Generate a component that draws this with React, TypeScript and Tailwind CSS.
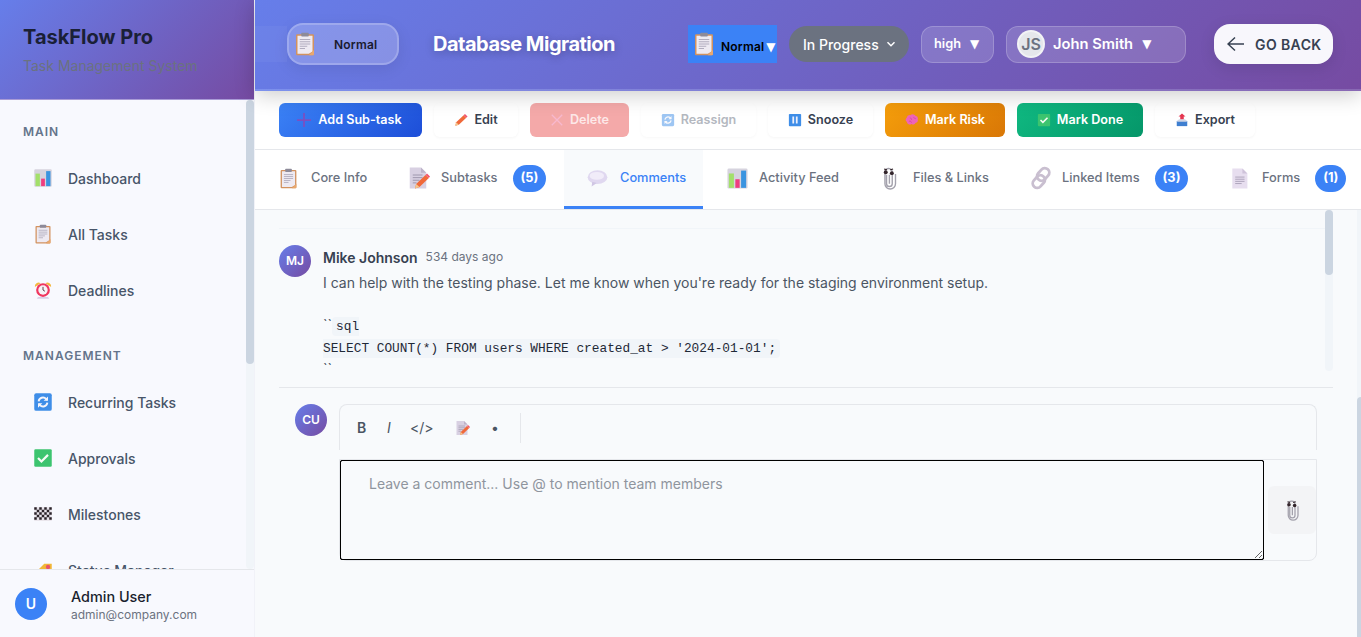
import React from "react";

type IconProps = { name: string; size?: number; className?: string };

function Emoji({ name, size = 20, className = "" }: IconProps) {
  const common = { width: size, height: size, viewBox: "0 0 32 32", className: "shrink-0 " + className };
  switch (name) {
    case "clipboard":
      return (
        <svg {...common}>
          <rect x="4" y="3" width="24" height="28" rx="1.5" fill="#d2925f" />
          <path d="M6 5h20v21l-5 3H6z" fill="#eeeaf2" />
          <path d="M28 24v5.5a1.5 1.5 0 0 1-1.5 1.5H21z" fill="#e9a86e" />
          <rect x="11" y="1" width="10" height="5" rx="1" fill="#8d8a99" />
          <path d="M9 10h14M9 13h14M9 16h14M9 19h10M9 22h7" stroke="#a9a5b8" strokeWidth="1.2" />
        </svg>
      );
    case "chart":
      return (
        <svg {...common}>
          <rect x="2" y="2" width="28" height="28" rx="2" fill="#d6d3de" />
          <rect x="4" y="9" width="7" height="20" fill="#a3e06a" />
          <rect x="13" y="17" width="6" height="12" fill="#ef3d80" />
          <rect x="21" y="5" width="7" height="24" fill="#3a94e0" />
        </svg>
      );
    case "memo":
      return (
        <svg {...common}>
          <path d="M5 2h15l7 7v21H5z" fill="#d8d0e2" />
          <path d="M20 2l7 7h-7z" fill="#bdb3c9" />
          <path d="M9 12h13M9 15.500h13M9 19h9M9 22.500h5" stroke="#9a92a8" strokeWidth="1.2" />
          <path d="M12 30l1.500-6L26 12l4.500 4L18 28z" fill="#f0693a" />
          <path d="M12 30l1.500-6 4.500 4z" fill="#f3c78e" />
          <path d="M26 12l2-2 4 4-1.500 2z" fill="#f2546d" />
        </svg>
      );
    case "bubble":
      return (
        <svg {...common}>
          <ellipse cx="16" cy="14" rx="15" ry="10.500" fill="#e0d8f0" />
          <path d="M8 21l-1 7 8-5z" fill="#d0c6e4" />
          <ellipse cx="15" cy="12" rx="11" ry="6" fill="#f1ecf9" />
        </svg>
      );
    case "clip":
      return (
        <svg {...common}>
          <path d="M13 12v11a3.500 3.500 0 0 0 7 0V9a4.500 4.500 0 0 0-9-.500V23a6.500 6.500 0 0 0 13 0V11M16.500 12v11" fill="none" stroke="#a3a1ac" strokeWidth="1.700" />
          <circle cx="12" cy="9" r="2.400" fill="#33252b" />
          <circle cx="19.500" cy="10" r="2.400" fill="#33252b" />
          <path d="M10 5l3.500 1M17.500 6l3.500-1" stroke="#33252b" strokeWidth="1.400" />
        </svg>
      );
    case "link":
      return (
        <svg {...common}>
          <g fill="none" stroke="#c9bfd0" strokeWidth="3.500">
            <rect x="-5.500" y="-5" width="11" height="17" rx="5.500" transform="translate(21 9) rotate(42)" />
            <rect x="-5.500" y="-12" width="11" height="17" rx="5.500" transform="translate(11 23) rotate(42)" />
          </g>
        </svg>
      );
    case "page":
      return (
        <svg {...common}>
          <path d="M6 2h14l7 7v21H6z" fill="#e7deef" />
          <path d="M20 2l7 7h-7z" fill="#cfc3da" />
          <path d="M10 14h13M10 17h13M10 20h13M10 23h9" stroke="#a79db5" strokeWidth="1.200" />
        </svg>
      );
    case "alarm":
      return (
        <svg {...common}>
          <path d="M3 11a6 6 0 0 1 9-6zM29 11a6 6 0 0 0-9-6z" fill="#f4b83f" />
          <path d="M8 27h16l2 3H6z" fill="#d9cfe6" />
          <circle cx="16" cy="16" r="11" fill="#f0365f" />
          <circle cx="16" cy="16" r="7.500" fill="#f6f2f6" />
          <path d="M16 11v5l3 2" stroke="#5a3040" strokeWidth="1.500" fill="none" />
        </svg>
      );
    case "repeat":
      return (
        <svg {...common}>
          <rect x="2" y="2" width="28" height="28" rx="3" fill="#3f8ee8" />
          <path d="M9 15a7 7 0 0 1 12-4l2 2M23 17a7 7 0 0 1-12 4l-2-2" fill="none" stroke="#f5f5fb" strokeWidth="3" />
          <path d="M24 7v7h-7zM8 25v-7h7z" fill="#f5f5fb" />
        </svg>
      );
    case "check":
      return (
        <svg {...common}>
          <rect x="2" y="2" width="28" height="28" rx="2" fill="#3cc46f" />
          <path d="M8 16l5.500 5.500L24 11" fill="none" stroke="#f5fbf5" strokeWidth="3.500" />
        </svg>
      );
    case "flag":
      return (
        <svg {...common}>
          <rect x="2" y="5" width="28" height="22" fill="#e7e3ea" />
          <path
            d="M2 5h4v4H2zM10 5h4v4h-4zM18 5h4v4h-4zM26 5h4v4h-4zM6 9h4v4H6zM14 9h4v4h-4zM22 9h4v4h-4zM2 13h4v4H2zM10 13h4v4h-4zM18 13h4v4h-4zM26 13h4v4h-4zM6 17h4v4H6zM14 17h4v4h-4zM22 17h4v4h-4zM2 21h4v4H2zM10 21h4v4h-4zM18 21h4v4h-4zM26 21h4v4h-4z"
            fill="#2a2228"
          />
        </svg>
      );
    case "tag":
      return (
        <svg {...common}>
          <path d="M2 22L18 6h12v12L14 32z" fill="#f1b737" />
          <circle cx="24" cy="11" r="3.500" fill="#e9546b" />
        </svg>
      );
    case "pencil":
      return (
        <svg {...common}>
          <path d="M3 29l2-8L22 5l6 6-17 16z" fill="#f0693a" />
          <path d="M3 29l2-8 6 6z" fill="#f3c78e" />
          <path d="M22 5l3-3 6 6-3 3z" fill="#f2546d" />
        </svg>
      );
    case "x":
      return (
        <svg {...common}>
          <path d="M4 4l24 24M28 4L4 28" stroke="#f7b9cf" strokeWidth="3" />
        </svg>
      );
    case "plus":
      return (
        <svg {...common}>
          <path d="M16 2v28M2 16h28" stroke="#7d4fc0" strokeWidth="3.500" />
        </svg>
      );
    case "pause":
      return (
        <svg {...common}>
          <rect x="2" y="2" width="28" height="28" rx="2" fill="#3f8ee8" />
          <path d="M10 8h4v16h-4zM18 8h4v16h-4z" fill="#eef0fb" />
        </svg>
      );
    case "brain":
      return (
        <svg {...common}>
          <path d="M4 20a6 6 0 0 1 0-9 7 7 0 0 1 8-6 8 8 0 0 1 12 1 7 7 0 0 1 5 9 6 6 0 0 1-5 8 6 6 0 0 1-9 2 7 7 0 0 1-11-5z" fill="#ee64b8" />
          <path d="M11 11c3 0 4 3 4 5M20 9c0 3 3 4 5 4M9 19c3-1 5 0 6 3" fill="none" stroke="#c9409a" strokeWidth="1.500" />
        </svg>
      );
    case "outbox":
      return (
        <svg {...common}>
          <path d="M4 18h24v12H4z" fill="#3f7fd0" />
          <path d="M9 14h14l5 6H4z" fill="#cfd5e6" />
          <path d="M12 14V8H8l8-7 8 7h-4v6z" fill="#e5354f" />
        </svg>
      );
    default:
      return null;
  }
}

const gradient = "bg-[linear-gradient(135deg,#667eea_0%,#764ba2_100%)]";

function NavItem({ icon, label }: { icon: string; label: string }) {
  return (
    <div className="h-[56px] shrink-0 flex items-center pl-[33px] text-[14px] font-medium text-[#475569]">
      <span className="w-[35px] flex"><Emoji name={icon} size={20} /></span>
      <span>{label}</span>
    </div>
  );
}

function NavHeading({ children }: { children: React.ReactNode }) {
  return (
    <div className="pl-[23px] text-[12px] font-semibold tracking-[1px] uppercase text-[#64748b] h-[18px] leading-[18px]">
      {children}
    </div>
  );
}

function Scrollbar({ thumb }: { thumb: string }) {
  return (
    <div className="w-[8px] shrink-0 h-full bg-[#f1f5f9] rounded-[4px]">
      <div className={`w-full rounded-[4px] bg-[#cbd5e1] ${thumb}`} />
    </div>
  );
}

function Sidebar() {
  return (
    <aside className="w-[255px] shrink-0 h-full flex flex-col bg-[#f8f9fe] border-r border-[#f1f2f8]">
      <div className={`h-[100px] shrink-0 px-[23px] pt-[22px] border-b border-[#a99bd6] ${gradient}`}>
        <div className="text-[20px] leading-[30px] font-bold text-[#1a2036]">TaskFlow Pro</div>
        <div className="text-[14px] leading-[21px] mt-[3px] text-[#6b7280]">Task Management System</div>
      </div>
      <div className="flex-1 min-h-0 flex">
        <nav className="flex-1 min-w-0 overflow-hidden">
          <div className="pt-[23px]">
            <NavHeading>MAIN</NavHeading>
            <div className="mt-[9px]">
              <NavItem icon="chart" label="Dashboard" />
              <NavItem icon="clipboard" label="All Tasks" />
              <NavItem icon="alarm" label="Deadlines" />
            </div>
          </div>
          <div className="pt-[29px]">
            <NavHeading>MANAGEMENT</NavHeading>
            <div className="mt-[9px]">
              <NavItem icon="repeat" label="Recurring Tasks" />
              <NavItem icon="check" label="Approvals" />
              <NavItem icon="flag" label="Milestones" />
              <NavItem icon="tag" label="Status Manager" />
            </div>
          </div>
        </nav>
        <Scrollbar thumb="h-[264px]" />
      </div>
      <div className="h-[68px] shrink-0 border-t border-[#e5e7eb] flex items-center pl-[15px] bg-[#f8f9fe]">
        <div className="w-[32px] h-[32px] rounded-full bg-[#3b82f6] text-white text-[14px] font-semibold flex items-center justify-center">U</div>
        <div className="ml-[24px] pt-[4px]">
          <div className="text-[14.4px] leading-[18px] font-medium text-[#1a1f2e]">Admin User</div>
          <div className="text-[12px] leading-[18px] text-[#6b7280]">admin@company.com</div>
        </div>
      </div>
    </aside>
  );
}

function Caret({ className = "" }: { className?: string }) {
  return <span className={"text-white font-['DejaVu_Sans',sans-serif] " + className}>▼</span>;
}

function Header() {
  return (
    <header className={`relative z-10 h-[91px] shrink-0 flex items-center pl-[32px] pr-[28px] pb-[1px] border-b-[2px] border-[#ffffff26] shadow-[0_4px_20px_rgba(0,0,0,0.2)] ${gradient}`}>
      <div className="absolute left-0 top-[26px] w-[32px] h-[36px] bg-[#ffffff0a]" />
      <div className="w-[112px] h-[42px] rounded-[16px] border-[2px] border-[#ffffff33] bg-[#ffffff33] flex items-center pl-[4px] shadow-[0_4px_16px_rgba(0,0,0,0.08)]">
        <Emoji name="clipboard" size={24} />
        <span className="ml-[17px] mt-[1px] text-[12px] tracking-[0.2px] font-semibold text-[#1a1a2e]">Normal</span>
      </div>
      <h1 className="ml-[34px] w-[255px] text-[20px] font-bold text-white tracking-[-0.5px] [text-shadow:0_2px_8px_rgba(0,0,0,0.25)]">Database Migration</h1>
      <div className="w-[89px] h-[38px] bg-[#3b82f6] flex items-center pl-[4px]">
        <Emoji name="clipboard" size={24} />
        <span className="ml-[5px] mt-[6px] text-[12px] tracking-[0.2px] font-semibold text-black">Normal</span>
        <Caret className="text-[12px] mt-[6px] ml-[2px]" />
      </div>
      <div className="ml-[12px] w-[120px] h-[36px] rounded-full bg-[#6b7280] flex items-center pl-[14px] text-white text-[14px] font-medium">
        In Progress
        <svg width="14" height="14" viewBox="0 0 24 24" fill="none" stroke="currentColor" strokeWidth="2.500" className="ml-[5px]"><path d="M6 9l6 6 6-6" /></svg>
      </div>
      <div className="ml-[12px] w-[73px] h-[37px] rounded-[12px] border border-[#ffffff33] bg-[#ffffff26] flex items-center pl-[12px] text-white text-[12.8px] font-semibold">
        high
        <Caret className="text-[12px] ml-[9px]" />
      </div>
      <div className="ml-[12px] w-[180px] h-[37px] rounded-[12px] border border-[#ffffff33] bg-[#ffffff26] flex items-center pl-[10px] text-white text-[14.72px] font-semibold">
        <span className="w-[28px] h-[28px] rounded-full bg-[#e5e7eb] border-[2px] border-[#ffffff80] text-[#6b7280] text-[16px] font-semibold flex items-center justify-center">JS</span>
        <span className="ml-[8px]">John Smith</span>
        <Caret className="text-[12px] ml-[9px]" />
      </div>
      <div className="ml-[28px] w-[119px] h-[40px] rounded-[16px] bg-[#f8f7fc] flex items-center pl-[13px] text-[#374151] text-[14px] font-semibold tracking-[0.4px] shadow-[0_4px_16px_rgba(0,0,0,0.1)]">
        <svg width="18" height="18" viewBox="0 0 18 18" fill="none" stroke="currentColor" strokeWidth="1.500"><path d="M17 9H1M8 2.500L1 9l7 6.500" /></svg>
        <span className="ml-[10px]">GO BACK</span>
      </div>
    </header>
  );
}

function ActionBtn({ icon, label, className, iconClass = "", w, size = 14 }: { icon: string; label: string; className: string; iconClass?: string; w: string; size?: number }) {
  return (
    <div className={`h-[34px] rounded-[6px] flex items-center justify-center gap-[6px] text-[12.6px] font-semibold ${w} ${className}`}>
      <Emoji name={icon} size={size} className={iconClass} />
      <span>{label}</span>
    </div>
  );
}

function ActionBar() {
  const white = "bg-white text-[#374151] shadow-[0_1px_3px_rgba(0,0,0,0.04)]";
  return (
    <div className="h-[59px] shrink-0 bg-white border-b border-[#e5e7eb] flex items-center pl-[24px] gap-[12px]">
      <ActionBtn icon="plus" size={16} label="Add Sub-task" w="w-[143px]" className="pr-[3px] bg-[linear-gradient(135deg,#3b82f6,#1d4ed8)] text-white" />
      <ActionBtn icon="pencil" label="Edit" w="w-[84px]" className={white} />
      <ActionBtn icon="x" label="Delete" w="w-[99px]" className="bg-[#f4a9a9] text-[#fde8e8]" />
      <ActionBtn icon="repeat" label="Reassign" w="w-[115px]" iconClass="opacity-50" className="bg-white text-[#b4b8bf] shadow-[0_1px_3px_rgba(0,0,0,0.03)]" />
      <ActionBtn icon="pause" label="Snooze" w="w-[105px]" className={white} />
      <ActionBtn icon="brain" label="Mark Risk" w="w-[120px]" className="bg-[linear-gradient(135deg,#f59e0b,#d97706)] text-white" />
      <ActionBtn icon="check" label="Mark Done" w="w-[126px]" className="bg-[linear-gradient(135deg,#10b981,#059669)] text-white" />
      <ActionBtn icon="outbox" label="Export" w="w-[100px]" className={white} />
    </div>
  );
}

function Tab({ icon, label, count, active, w, pl, gap, iconSize = 21 }: { icon: string; label: string; count?: string; active?: boolean; w: string; pl: string; gap: string; iconSize?: number }) {
  return (
    <div className={`h-full shrink-0 flex items-center text-[12.8px] font-medium border-b-[3px] ${w} ${pl} ${active ? "border-[#3b82f6] bg-[#f8fafc] text-[#3b82f6]" : "border-transparent text-[#6b7280]"}`}>
      <span className={`flex ${gap}`}><Emoji name={icon} size={iconSize} /></span>
      <span>{label}</span>
      {count && (
        <span className="ml-[15px] h-[27px] px-[8px] rounded-[14px] bg-[#3b82f6] text-white flex items-center font-bold">{count}</span>
      )}
    </div>
  );
}

function Tabs() {
  return (
    <div className="h-[60px] shrink-0 bg-white border-b border-[#e5e7eb] flex overflow-hidden">
      <Tab icon="clipboard" label="Core Info" w="w-[136px]" pl="pl-[23px]" gap="mr-[12px]" />
      <Tab icon="memo" iconSize={24} label="Subtasks" count="(5)" w="w-[173px]" pl="pl-[15px]" gap="mr-[11px]" />
      <Tab icon="bubble" label="Comments" active w="w-[139px]" pl="pl-[23px]" gap="mr-[12px]" />
      <Tab icon="chart" iconSize={23} label="Activity Feed" w="w-[160px]" pl="pl-[23px]" gap="mr-[10px]" />
      <Tab icon="clip" iconSize={26} label="Files & Links" w="w-[145px]" pl="pl-[13px]" gap="mr-[11px]" />
      <Tab icon="link" iconSize={26} label="Linked Items" count="(3)" w="w-[205px]" pl="pl-[20px]" gap="mr-[8px]" />
      <Tab icon="page" iconSize={23} label="Forms" count="(1)" w="w-[140px]" pl="pl-[15px]" gap="mr-[11px]" />
    </div>
  );
}

function Avatar({ text }: { text: string }) {
  return (
    <div className={`w-[32px] h-[32px] shrink-0 rounded-full text-white text-[12px] font-semibold flex items-center justify-center ${gradient}`}>{text}</div>
  );
}

function Comments() {
  return (
    <div className="h-[161px] shrink-0 flex">
      <div className="flex-1 min-w-0 overflow-hidden">
        <div className="h-[19px] border-b border-[#f1f5f9]" />
        <div className="flex gap-[12px] pt-[16px]">
          <Avatar text="MJ" />
          <div className="flex-1 min-w-0">
            <div className="flex items-center gap-[8px] h-[24px]">
              <span className="text-[14px] font-semibold text-[#374151]">Mike Johnson</span>
              <span className="text-[12px] text-[#6b7280]">534 days ago</span>
            </div>
            <div className="mt-[3px] text-[14px] leading-[1.5] text-[#4b5563] whitespace-pre-wrap">
              {"I can help with the testing phase. Let me know when you're ready for the staging environment setup.\n\n``"}
              <code className="font-['Liberation_Mono',monospace] text-[12.8px] text-[#1f2937] bg-[#f1f5f9] px-[4px] py-[2px] rounded-[4px]">{"sql\nSELECT COUNT(*) FROM users WHERE created_at > '2024-01-01';\n"}</code>
              {"``"}
            </div>
          </div>
        </div>
      </div>
      <Scrollbar thumb="h-[65px]" />
    </div>
  );
}

function Composer() {
  return (
    <div className="mt-[16px] border-t border-[#e5e7eb] pt-[16px] pl-[16px] pr-[16px] flex gap-[12px]">
      <Avatar text="CU" />
      <div className="flex-1 min-w-0">
        <div className="h-[46px] rounded-t-[8px] border border-b-0 border-[#e5e7eb] flex items-center pl-[17px] text-[#4b5563] text-[14px]">
          <span className="font-semibold w-[30px]">B</span>
          <span className="italic w-[23px]">I</span>
          <span className="w-[46px]">{"</>"}</span>
          <span className="w-[35px] flex"><Emoji name="memo" size={16} className="-ml-[2px]" /></span>
          <span className="w-[29px]">•</span>
          <span className="h-[30px] w-px bg-[#e5e7eb]" />
        </div>
        <div className="mt-[9px] h-[102px] rounded-b-[8px] border border-[#e5e7eb] flex items-center">
          <textarea
            readOnly
            placeholder="Leave a comment... Use @ to mention team members"
            className="w-[924px] h-[100px] shrink-0 bg-transparent border border-black rounded-[2px] outline outline-[1px] outline-black -outline-offset-1 pl-[28px] pt-[12px] text-[14px] leading-[21px] placeholder:text-[#8f959e]"
          />
          <div className="ml-[4px] w-[48px] h-[48px] rounded-[6px] bg-[#f3f4f6] flex items-center justify-center">
            <Emoji name="clip" size={24} />
          </div>
        </div>
      </div>
    </div>
  );
}

function Content() {
  return (
    <div className="flex-1 min-h-0 flex bg-[#f8fafc]">
      <div className="flex-1 min-w-0 px-[24px]">
        <Comments />
        <Composer />
      </div>
      <div className="w-[4px] shrink-0 bg-[#f1f5f9] pt-[187px]">
        <div className="h-full bg-[#cbd5e1] rounded-tl-[4px]" />
      </div>
    </div>
  );
}

export default function App() {
  return (
    <div className="w-[1361px] h-[637px] flex overflow-hidden font-['Inter',sans-serif] bg-white">
      <Sidebar />
      <main className="flex-1 min-w-0 flex flex-col h-full">
        <Header />
        <ActionBar />
        <Tabs />
        <Content />
      </main>
    </div>
  );
}
